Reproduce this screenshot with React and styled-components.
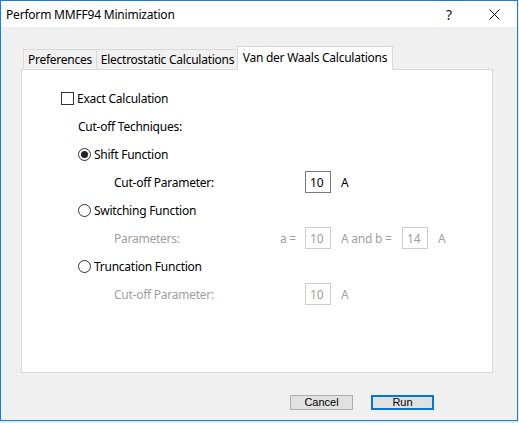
import styled, { createGlobalStyle } from "styled-components";

const Global = createGlobalStyle`
  html, body {
    margin: 0;
    padding: 0;
    background: #e6e6e6;
  }
  body {
    font-family: "Noto Sans", "Open Sans", sans-serif;
    font-size: 12px;
    color: #000;
  }
`;

const Window = styled.div`
  width: 518px;
  height: 421px;
  box-sizing: border-box;
  border: 1px solid #1a7fd6;
  display: flex;
  flex-direction: column;
  background: #f0f0f0;
`;

const TitleBar = styled.div`
  height: 26px;
  background: #fff;
  display: flex;
  align-items: center;
  padding-left: 5px;
`;

const Title = styled.div`
  flex: 1;
  font-size: 12px;
  letter-spacing: -0.2px;
`;

const TitleButton = styled.div`
  width: ${(p) => p.$w}px;
  height: 26px;
  display: flex;
  align-items: center;
  justify-content: center;
  font-size: 14px;
  color: #111;
`;

const Body = styled.div`
  flex: 1;
  padding: 19px 24px 0 20px;
  display: flex;
  flex-direction: column;
`;

const TabRow = styled.div`
  display: flex;
  align-items: flex-end;
  height: 23px;
  margin-left: 2px;
  position: relative;
  z-index: 1;
`;

const Tab = styled.div`
  box-sizing: border-box;
  width: ${(p) => p.$w}px;
  height: ${(p) => (p.$active ? 24 : 20)}px;
  margin-bottom: ${(p) => (p.$active ? -1 : 0)}px;
  margin-left: ${(p) => (p.$first ? 0 : p.$active ? -2 : -1)}px;
  border: 1px solid #d9d9d9;
  border-bottom: none;
  background: ${(p) => (p.$active ? "#fff" : "#f0f0f0")};
  display: flex;
  align-items: center;
  justify-content: center;
  padding-bottom: ${(p) => (p.$active ? 2 : 0)}px;
  white-space: nowrap;
  letter-spacing: -0.25px;
`;

const Panel = styled.div`
  box-sizing: border-box;
  width: 472px;
  height: 304px;
  background: #fff;
  border: 1px solid #d9d9d9;
  padding: 14px 0 0 39px;
  display: flex;
  flex-direction: column;
`;

const Row = styled.div`
  height: 28px;
  display: flex;
  align-items: center;
  padding-left: ${(p) => p.$indent || 0}px;
  color: ${(p) => (p.$disabled ? "#a0a0a0" : "#000")};
  letter-spacing: -0.25px;
  white-space: nowrap;
`;

const Check = styled.span`
  box-sizing: border-box;
  width: 13px;
  height: 13px;
  border: 1px solid #333;
  background: #fff;
  margin-right: 3px;
`;

const Radio = styled.span`
  box-sizing: border-box;
  width: 13px;
  height: 13px;
  border: 1px solid #333;
  border-radius: 50%;
  background: #fff;
  margin-right: 3px;
  display: flex;
  align-items: center;
  justify-content: center;
  &::after {
    content: "";
    width: 7px;
    height: 7px;
    border-radius: 50%;
    background: ${(p) => (p.$checked ? "#222" : "transparent")};
  }
`;

const Label = styled.span`
  display: inline-block;
  width: ${(p) => p.$w}px;
`;

const Field = styled.input`
  box-sizing: border-box;
  width: 26px;
  height: 22px;
  padding: 0 0 0 4px;
  margin: 0;
  border: 1px solid ${(p) => (p.disabled ? "#cccccc" : "#7a7a7a")};
  background: #fff;
  font-family: inherit;
  font-size: 12px;
  color: ${(p) => (p.disabled ? "#a0a0a0" : "#000")};
  outline: none;
`;

const Unit = styled.span`
  margin-left: ${(p) => p.$gap ?? 10}px;
  width: ${(p) => (p.$w ? `${p.$w}px` : "auto")};
  display: inline-block;
`;

const Footer = styled.div`
  display: flex;
  gap: 18px;
  padding: 22px 0 0 269px;
`;

const Button = styled.button`
  box-sizing: border-box;
  width: 63px;
  height: 15px;
  padding: 0;
  background: #e1e1e1;
  border: ${(p) => (p.$default ? "2px solid #0078d7" : "1px solid #adadad")};
  font-family: "Liberation Sans", Arial, sans-serif;
  font-size: 11px;
  line-height: 1;
  color: #000;
`;

const CloseIcon = () => (
  <svg width="11" height="11" viewBox="0 0 11 11">
    <path d="M0.5 0.5 L10.5 10.5 M10.5 0.5 L0.5 10.5" stroke="#111" strokeWidth="1" />
  </svg>
);

export default function App() {
  return (
    <>
      <Global />
      <Window>
        <TitleBar>
          <Title>Perform MMFF94 Minimization</Title>
          <TitleButton $w={44}>?</TitleButton>
          <TitleButton $w={46}>
            <CloseIcon />
          </TitleButton>
        </TitleBar>
        <Body>
          <TabRow>
            <Tab $first $w={74}>Preferences</Tab>
            <Tab $w={143}>Electrostatic Calculations</Tab>
            <Tab $active $w={156}>Van der Waals Calculations</Tab>
          </TabRow>
          <Panel>
            <Row>
              <Check />
              Exact Calculation
            </Row>
            <Row $indent={17}>Cut-off Techniques:</Row>
            <Row $indent={17}>
              <Radio $checked />
              Shift Function
            </Row>
            <Row $indent={53}>
              <Label $w={191}>Cut-off Parameter:</Label>
              <Field readOnly value="10" />
              <Unit>A</Unit>
            </Row>
            <Row $indent={17}>
              <Radio />
              Switching Function
            </Row>
            <Row $indent={53} $disabled>
              <Label $w={166}>Parameters:</Label>
              <Label $w={25}>a =</Label>
              <Field disabled value="10" />
              <Unit $w={61}>A and b =</Unit>
              <Field disabled value="14" />
              <Unit>A</Unit>
            </Row>
            <Row $indent={17}>
              <Radio />
              Truncation Function
            </Row>
            <Row $indent={53} $disabled>
              <Label $w={191}>Cut-off Parameter:</Label>
              <Field disabled value="10" />
              <Unit>A</Unit>
            </Row>
          </Panel>
          <Footer>
            <Button>Cancel</Button>
            <Button $default>Run</Button>
          </Footer>
        </Body>
      </Window>
    </>
  );
}
